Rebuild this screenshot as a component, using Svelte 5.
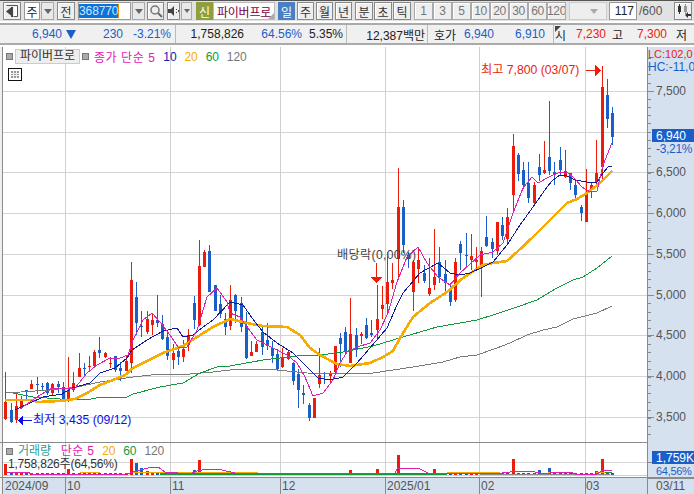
<script>
  const C = [
    'R372,420,402,419','B403,423,410,422','R393,423,406,420','R396,408,399,407','B390,399,390,391','R380,389,384,389','B377,394,384,385','B383,391,386,387','B382,395,383,393','R383,395,384,393',
    'B381,393,384,387','B382,401,387,401','R357,402,390,401','R372,392,383,390','R353,377,368,377','B363,375,368,369','R356,371,366,367','R350,368,352,366','B337,358,350,353','R352,358,353,357',
    'R357,368,363,364','B356,372,356,370','B362,381,368,371','R355,371,361,371','R262,373,280,363','B282,335,297,323','B311,337,326,327','R311,334,319,332','R313,335,320,325','B295,327,320,323',
    'B315,340,324,339','B333,360,337,356','R344,369,353,360','B347,365,351,357','R340,362,349,357','R329,351,335,345','B296,329,303,320','R240,326,266,325','R250,267,252,267','B245,292,251,292',
    'B285,311,285,311','B295,318,304,314','B313,335,319,327','R285,330,300,326','B294,323,295,311','B297,332,303,327','B312,359,326,358','R341,356,352,356','R341,352,344,352','B327,355,332,347',
    'B323,350,340,346','B341,363,348,356','B349,371,354,369','R348,368,357,367','R351,360,352,359','B362,385,363,381','B369,408,374,390','B385,404,393,395','B403,421,405,418','R398,418,398,418',
    'R348,388,375,384','B372,384,373,374','R371,384,374,376','R346,374,346,372','B333,367,338,344','B327,355,332,352','R298,363,334,363','B328,357,335,349','R332,344,334,336','B318,339,325,338',
    'B320,337,333,335','R285,338,319,330','R286,319,305,309','R252,314,282,304','R263,289,280,283','R168,277,207,259','B200,253,207,245','B252,268,255,259','R260,311,262,292','R248,283,260,269',
    'B265,283,273,281','R258,296,288,294','R229,290,277,285','B247,283,262,277','B260,293,274,283','B283,306,288,302','R258,302,262,300','B241,270,244,253','B233,268,255,256','R234,270,256,260',
    'R247,271,260,262','R247,297,251,267','B216,247,237,246','B238,258,242,249','R222,255,222,251','B217,240,225,236','R208,243,217,239','R134,210,146,195','B153,181,155,174','B162,189,170,185',
    'B162,203,183,198','R182,206,185,203','B154,181,167,175','R141,174,170,173','B101,175,157,171','B162,185,172,175','B147,175,160,170','R150,178,171,177','B173,190,173,183','B180,201,185,195',
    'B205,221,207,213','R169,222,192,222','R182,198,185,190','R140,185,173,182','R66,180,87,167','B79,128,95,119','B107,145,113,137'
  ];
  const volTops = {0:464,2:472,12:469,24:459,25:463,26:468,27:471,36:470,37:460,66:470,71:469,75:455,82:469,97:459,102:470,104:468,113:471,114:459,115:472};
  const candles = C.map((s, i) => {
    const [a, b, c, d] = s.slice(1).split(',').map(Number);
    return { i, x: Math.round(5.3 + 5.23 * i), red: s[0] === 'R', a, b, c, d, vt: volTops[i] ?? 473 };
  });
  const gridY = [91, 132, 172, 213, 254, 295, 335, 376, 417];
  const gridX = [65, 170, 280, 385, 479, 585];
  const axis = [['7,500',91],['6,500',172],['6,000',213],['5,500',254],['5,000',295],['4,500',335],['4,000',376],['3,500',417]];
  const minor = [];
  for (let y = 58; y < 440; y += 8.18) minor.push(Math.round(y));
  const dates = [['2024/09',5],['10',67],['11',172],['12',282],['2025/01',387],['02',481],['03',586]];

  const ma5 = '20,409 37,397 50,389 63,388 75,388 87,373 97,365 110,358 120,358 128,355 133,340 143,320 152,313 160,322 170,335 178,347 187,347 197,330 207,297 217,288 227,302 230,313 240,317 247,327 257,340 273,348 287,355 297,363 305,377 313,396 323,393 333,380 340,363 347,352 357,347 370,343 380,330 388,313 397,282 407,257 418,247 427,263 438,277 450,285 460,273 480,255 493,252 503,243 513,213 523,188 532,177 538,183 549,177 560,172 567,172 575,179 582,187 590,192 597,191 603,165 612,143';
  const ma10 = '15,410 30,403 43,397 62,394 72,388 90,383 100,373 115,368 127,358 132,350 147,340 163,331 177,328 183,337 193,335 203,327 213,320 230,302 243,305 255,322 263,332 277,343 293,353 307,367 318,378 330,380 343,377 357,363 370,348 387,328 397,305 403,293 420,273 438,263 450,273 460,275 470,273 483,267 493,262 507,245 520,225 533,207 547,187 553,180 560,175 567,176 575,180 587,182 597,182 603,173 608,167 612,166';
  const ma20 = '5,400 30,400 38,402 60,401 75,399 87,393 100,385 113,380 125,375 133,368 147,361 163,353 183,346 197,337 213,327 230,319 247,323 263,326 287,327 300,335 310,348 320,355 337,364 350,366 370,363 383,357 393,351 400,338 413,317 430,303 447,292 463,278 483,265 493,263 507,261 517,252 533,237 548,222 560,210 567,203 577,199 587,193 600,183 612,171';
  const ma60 = '13,393 33,397 60,399 87,400 100,397 127,397 133,394 160,387 183,383 200,373 217,367 230,366 263,360 297,356 320,355 343,352 373,346 403,337 437,327 460,323 477,320 493,315 517,307 537,300 557,288 573,280 583,277 597,268 612,256';
  const ma120 = '6,393 50,390 77,387 100,382 133,377 160,374 190,374 213,372 230,370 247,369 277,370 307,373 347,374 373,373 413,367 443,362 460,357 477,355 497,348 510,343 527,335 543,330 557,327 573,319 597,313 612,306';
  const vMag = '7,472 27,472 32,474 125,474 130,473 140,470 148,468 158,467 165,472 190,474 197,471 207,469 222,470 235,473 300,474 395,473 397,469 405,468 420,469 428,473 495,474 510,472 527,471 535,472 545,474 555,472 570,472 575,474 597,474 603,470 612,470';

  const tools1 = ['주','월','년'];
  const tools2 = ['분','초','틱'];
  const nums = ['1','3','5','10','20','30','60','120'];

  const seg1 = [['230',47,'blue'],['-3.21%',48,'blue']];
  const seg2 = [['1,758,826',68,''],['64.56%',58,'blue'],['5.35%',41,'']];
  const seg3 = [['12,387백만',78,'']];
  const seg4 = [['호가',28,''],['6,940',38,'blue'],['6,910',51,'blue']];
  const seg5 = [['시',12,''],['7,230',40,'red'],['고',17,''],['7,300',44,'red'],['저',20,'']];
</script>

<div class="app">
  <div class="row1">
    <button class="btn w18"><svg width="14" height="14" viewBox="0 0 14 14"><path d="M1.5 1.5h11v11h-4" fill="none" stroke="#555"/><rect x="9" y="3" width="3" height="9" fill="#fff"/><rect x="6" y="3" width="2" height="10" fill="#444"/><path d="M6 3.5 L1 7.5 L6 11.5Z" fill="#444"/></svg></button>
    <div class="field f16">주</div>
    <button class="arrow w13"><i class="tri"></i></button>
    <button class="btn w18 ml2">전</button>
    <div class="field code"><span class="sel">368770</span><i class="caret"></i></div>
    <button class="arrow w13"><i class="tri"></i></button>
    <button class="btn w17 ml1"><svg width="14" height="14" viewBox="0 0 14 14"><circle cx="6" cy="6" r="4" fill="none" stroke="#777" stroke-width="1.5"/><path d="M9 9l4 4" stroke="#666" stroke-width="2"/></svg></button>
    <button class="btn w13 ml2"><svg width="11" height="12" viewBox="0 0 11 12"><path d="M0 4h3l3-3v10L3 8H0z" fill="#444"/><path d="M8 4h1v1H8zM8 7h1v1H8zM10 5h1v2h-1z" fill="#444"/></svg></button>
    <button class="arrow w11"><i class="tri small"></i></button>
    <div class="new">신</div>
    <div class="name">파이버프로<i class="corner"></i></div>
    <button class="btn w17 active ml2">일</button>
    <div class="tools">{#each tools1 as t}<button class="btn w17">{t}</button>{/each}</div>
    <div class="tools tight">{#each tools2 as t}<button class="btn w18">{t}</button>{/each}</div>
    <div class="nums">{#each nums as n}<button class="btn num">{n}</button>{/each}</div>
    <button class="arrow blank"><i class="tri pale"></i></button>
    <div class="field count">117</div>
    <span class="total">/600</span>
    <button class="btn w18 last"><svg width="15" height="14" viewBox="0 0 15 14"><path d="M3.5 0v10M9.5 0v10" stroke="#333"/><rect x="2" y="2" width="3" height="6" fill="#333"/><path d="M9.5 0v10" stroke="#999"/><rect x="8" y="2" width="3" height="6" fill="#999"/><path d="M9 11 L12 8 V10 H15 V12 H12 V14Z" fill="#333"/></svg></button>
  </div>

  <div class="row2">
    <div class="seg s1"><span class="blue first">6,940</span><i class="down"></i>{#each seg1 as [t,w,c]}<span class={c} style:width="{w}px">{t}</span>{/each}</div>
    <div class="seg s2">{#each seg2 as [t,w,c]}<span class={c} style:width="{w}px">{t}</span>{/each}</div>
    <div class="seg s3">{#each seg3 as [t,w,c]}<span class={c} style:width="{w}px">{t}</span>{/each}</div>
    <div class="seg s4">{#each seg4 as [t,w,c]}<span class={c} style:width="{w}px">{t}</span>{/each}</div>
    <div class="seg s5"><i class="mark"></i>{#each seg5 as [t,w,c]}<span class={c} style:width="{w}px">{t}</span>{/each}</div>
  </div>

  <div class="chart">
    <svg width="694" height="447" viewBox="0 47 694 447" shape-rendering="crispEdges">
      <rect x="647" y="47" width="47" height="447" fill="#d6e1ef"/>
      <rect x="0" y="477" width="694" height="17" fill="#d6e1ef"/>
      <rect x="0" y="47" width="2" height="447" fill="#efefef"/>
      <rect x="2" y="47" width="1" height="447" fill="#8a8a8a"/>

      {#each gridY as y}<rect x="3" {y} width="644" height="1" fill="#d4d4d4"/>{/each}
      <rect x="3" y="462" width="644" height="1" fill="#d8d8d8"/>
      <rect x="3" y="475" width="644" height="1" fill="#d0d0d0"/>
      {#each gridX as x}<rect {x} y="47" width="1" height="430" fill="#cfcfcf"/>{/each}

      {#each candles as c}
        <rect x={c.x} y={c.a} width="1" height={c.b - c.a} fill={c.red ? '#ec1c0c' : '#1a5fc8'}/>
        <rect x={c.x - 1} y={c.c} width="3" height={Math.max(1, c.d - c.c)} fill={c.red ? '#ec1c0c' : '#1a5fc8'}/>
      {/each}

      <polyline points={ma120} fill="none" stroke="#7a7a7a"/>
      <polyline points={ma60} fill="none" stroke="#0f9a3c"/>
      <polyline points={ma20} fill="none" stroke="#f5ab00" stroke-width="2.6"/>
      <polyline points={ma10} fill="none" stroke="#101a9c"/>
      <polyline points={ma5} fill="none" stroke="#e020b0"/>

      <rect x="0" y="442" width="647" height="1" fill="#8a8a8a"/>

      {#each candles as c}
        <rect x={c.x - 1} y={c.vt} width="3" height={475 - c.vt} fill={c.red ? '#ec1c0c' : '#1a5fc8'}/>
      {/each}
      <polyline points="80,472 100,472" fill="none" stroke="#f5ab00"/>
      <polyline points="130,472 258,472" fill="none" stroke="#f5ab00"/>
      <polyline points="447,472 500,472" fill="none" stroke="#f5ab00"/>
      <polyline points="548,472 560,472" fill="none" stroke="#f5ab00"/>
      <polyline points="596,472 610,472" fill="none" stroke="#f5ab00"/>
      <polyline points="480,474 610,474" fill="none" stroke="#8a8a8a"/>
      <rect x="160" y="473" width="287" height="2" fill="#0f9a3c"/>
      <polyline points="605,473 612,472" fill="none" stroke="#0f9a3c"/>
      <polyline points={vMag} fill="none" stroke="#e020b0"/>

      <rect x="0" y="477" width="694" height="1" fill="#8a8a8a"/>
      <rect x="647" y="47" width="1" height="447" fill="#8a8a8a"/>
      {#each gridX as x}<rect {x} y="478" width="1" height="16" fill="#8a8a8a"/>{/each}
      {#each minor as y}<rect x="648" {y} width="3" height="1" fill="#8a8a8a"/>{/each}
      {#each axis as [, y]}<rect x="648" {y} width="6" height="1" fill="#8a8a8a"/>{/each}
      <rect x="648" y="462" width="6" height="1" fill="#8a8a8a"/>
      <rect x="647" y="478" width="47" height="1" fill="#8a8a8a"/>

      <rect x="586" y="70" width="10" height="1" fill="#ec1c0c"/>
      <path d="M595 65 L601 70.5 L595 76Z" fill="#ec1c0c"/>
      <path d="M32 420 H23 V415 L18 420.5 L23 426 V421 H32Z" fill="#0a10e0"/>
      <rect x="376" y="263" width="1" height="15" fill="#ec1c0c"/>
      <path d="M371 277 H382 L376.5 283Z" fill="#ec1c0c"/>

      <rect x="652" y="129" width="42" height="13" fill="#1a5fc8"/>
      <rect x="652" y="451" width="42" height="13" fill="#1a5fc8"/>

      <g shape-rendering="auto">
        {#each axis as [t, y]}<text x="656" y={y + 4} class="axt">{t}</text>{/each}
        {#each dates as [t, x]}<text {x} y="490" class="axt">{t}</text>{/each}
        <text x="656" y="490" class="axt">03/11</text>
        <text x="656" y="140" class="axt wh">6,940</text>
        <text x="656" y="153" class="axt bl tight2">-3,21%</text>
        <text x="656" y="462" class="axt wh">1,759K</text>
        <text x="656" y="474.5" class="axt bl tight2 small2">64,56%</text>
        <text x="648" y="58" class="axt rd small2">LC:102,0</text>
        <text x="648" y="71" class="axt bl">HC:-11,0</text>
        <text x="481" y="74" class="ann rd">최고 7,800 (03/07)</text>
        <text x="33" y="424" class="ann navy">최저 3,435 (09/12)</text>
        <text x="337" y="259" class="ann dark">배당락(0,00%)</text>
      </g>
    </svg>

    <div class="legend">
      <i class="sq"></i><span class="lbtn">파이버프로</span><i class="sq"></i>
      <span class="lg mag first">종가 단순 5</span><span class="lg nv">10</span><span class="lg or">20</span><span class="lg gr">60</span><span class="lg gy">120</span>
    </div>
    <svg class="gridicon" width="14" height="13" viewBox="0 0 14 13"><rect x=".5" y=".5" width="13" height="12" fill="#fff" stroke="#111"/><path d="M3 3h8v7H3z" fill="#999"/><path d="M5.5 3v7M8.5 3v7M3 5.5h8M3 7.5h8" stroke="#eee"/></svg>

    <div class="vlegend">
      <div class="vline"><i class="sq"></i><span class="lg teal">거래량</span><span class="lg mag wide">단순 5</span><span class="lg or">20</span><span class="lg gr">60</span><span class="lg gy">120</span></div>
      <div class="vval">1,758,826주(64,56%)</div>
    </div>
  </div>
</div>

<style>
  :global(body) { margin: 0; }
  .app { width: 694px; height: 494px; overflow: hidden; background: #fff; font: 12px "Liberation Sans", "Noto Sans CJK KR", sans-serif; color: #222; }
  .row1 { height: 21px; box-sizing: border-box; padding: 1px 0 0 3px; background: #e2e2e2; border-top: 1px solid #555; display: flex; align-items: flex-start; }
  button { padding: 0; margin: 0; font: inherit; color: #333; height: 18px; box-sizing: border-box; display: flex; align-items: center; justify-content: center; overflow: hidden; }
  .btn { background: #eee; border: 1px solid #888; box-shadow: inset 1px 1px 0 #fff; }
  .w18 { width: 18px; } .w17 { width: 17px; } .w13 { width: 13px; } .w11 { width: 11px; }
  .ml1 { margin-left: 2px; } .ml2 { margin-left: 3px; }
  .arrow { background: #e9e9e9; border: 1px solid #aaa; margin-left: 1px; }
  .tri { width: 0; height: 0; border: 4px solid transparent; border-top: 5px solid #666; border-bottom: 0; }
  .tri.small { border-width: 3px; border-top-width: 4px; border-bottom: 0; }
  .tri.pale { border-top-color: #aaa; }
  .field { height: 18px; box-sizing: border-box; background: #fff; border: 1px solid #999; display: flex; align-items: center; justify-content: center; }
  .f16 { width: 16px; margin-left: 3px; }
  .code { width: 53px; margin-left: 3px; justify-content: flex-start; }
  .sel { background: #0a74da; color: #cfe4ff; letter-spacing: -.1px; line-height: 14px; }
  .caret { width: 1px; height: 14px; background: #f08a00; }
  .new { width: 17px; height: 18px; margin-left: 4px; background: #8f9f3f; color: #fff; display: flex; align-items: center; justify-content: center; }
  .name { position: relative; width: 62px; height: 18px; box-sizing: border-box; background: #fff; border: 1px solid #bbb; color: #7a0040; letter-spacing: -.2px; display: flex; align-items: center; justify-content: center; }
  .corner { position: absolute; right: 0; bottom: 0; width: 0; height: 0; border-left: 6px solid transparent; border-bottom: 6px solid #aaa; }
  .active { background: #4a7fc4; color: #fff; border-color: #4a7fc4; box-shadow: none; }
  .tools { display: flex; gap: 2px; margin-left: 2px; }
  .tight { gap: 1px; margin-left: 3px; }
  .nums { display: flex; margin-left: 3px; }
  .num { width: 19px; color: #777; letter-spacing: -.4px; border-color: #aaa; }
  .blank { width: 38px; margin-left: 3px; background: #eee; border-color: #ccc; justify-content: flex-end; padding-right: 8px; }
  .count { width: 28px; margin-left: 2px; justify-content: flex-end; padding-right: 2px; }
  .total { margin-left: 2px; color: #555; line-height: 18px; width: 33px; }
  .last { margin-left: 2px; }

  .row2 { height: 22px; margin-top: 2px; box-sizing: border-box; background: #f0f0f0; border-top: 2px solid #aaa; border-bottom: 2px solid #aaa; padding-left: 2px; display: flex; }
  .seg { display: flex; align-items: center; border-right: 1px solid #bbb; box-sizing: border-box; position: relative; }
  .seg span { flex: none; text-align: right; white-space: nowrap; }
  .seg .first { width: 60px; }
  .down { flex: none; width: 0; height: 0; margin-left: 4px; border-left: 5px solid transparent; border-right: 5px solid transparent; border-top: 9px solid #1a5fc8; }
  .s1 { width: 174px; } .s2 { width: 171px; } .s3 { width: 81px; } .s4 { width: 126px; }
  .s5 { flex: 1; border-right: 0; }
  .mark { position: absolute; left: 1px; top: 1px; width: 0; height: 0; border-right: 6px solid transparent; border-top: 6px solid #444; }
  .blue { color: #1a5fc8; } .red { color: #ec1c0c; }

  .chart { position: relative; height: 447px; margin-top: 2px; }
  .chart > svg:first-child { display: block; }
  .axt { font-size: 12px; fill: #555; }
  .tight2 { letter-spacing: -.3px; }
  .small2 { font-size: 11px; }
  .ann { font-size: 12.2px; }
  .wh { fill: #fff; } .bl { fill: #1a5fc8; } .rd { fill: #ec1c0c; } .navy { fill: #0a10e0; } .dark { fill: #444; letter-spacing: .3px; }

  .legend { position: absolute; left: 6px; top: 2px; display: flex; align-items: center; height: 15px; }
  .sq { width: 5px; height: 5px; background: #aaa; border: 1px solid #777; flex: none; }
  .lbtn { width: 65px; height: 15px; margin: 0 2px; box-sizing: border-box; background: #eee; border: 1px solid #ccc; text-align: center; line-height: 13px; color: #333; }
  .lg { margin-left: 8px; letter-spacing: -.1px; }
  .lg.first { margin-left: 5px; letter-spacing: .55px; }
  .mag { color: #e020b0; } .nv { color: #1020b0; } .or { color: #f5ab00; } .gr { color: #0f9a3c; } .gy { color: #777; } .teal { color: #2a9a9a; }
  .gridicon { position: absolute; left: 8px; top: 21px; }
  .vlegend { position: absolute; left: 6px; top: 397px; }
  .vline { display: flex; align-items: center; height: 14px; line-height: 14px; }
  .vline .teal { margin-left: 5px; }
  .lg.wide { margin-left: 10px; letter-spacing: .3px; }
  .vval { color: #333; line-height: 12px; height: 12px; margin-left: 2px; letter-spacing: -.2px; }
</style>
